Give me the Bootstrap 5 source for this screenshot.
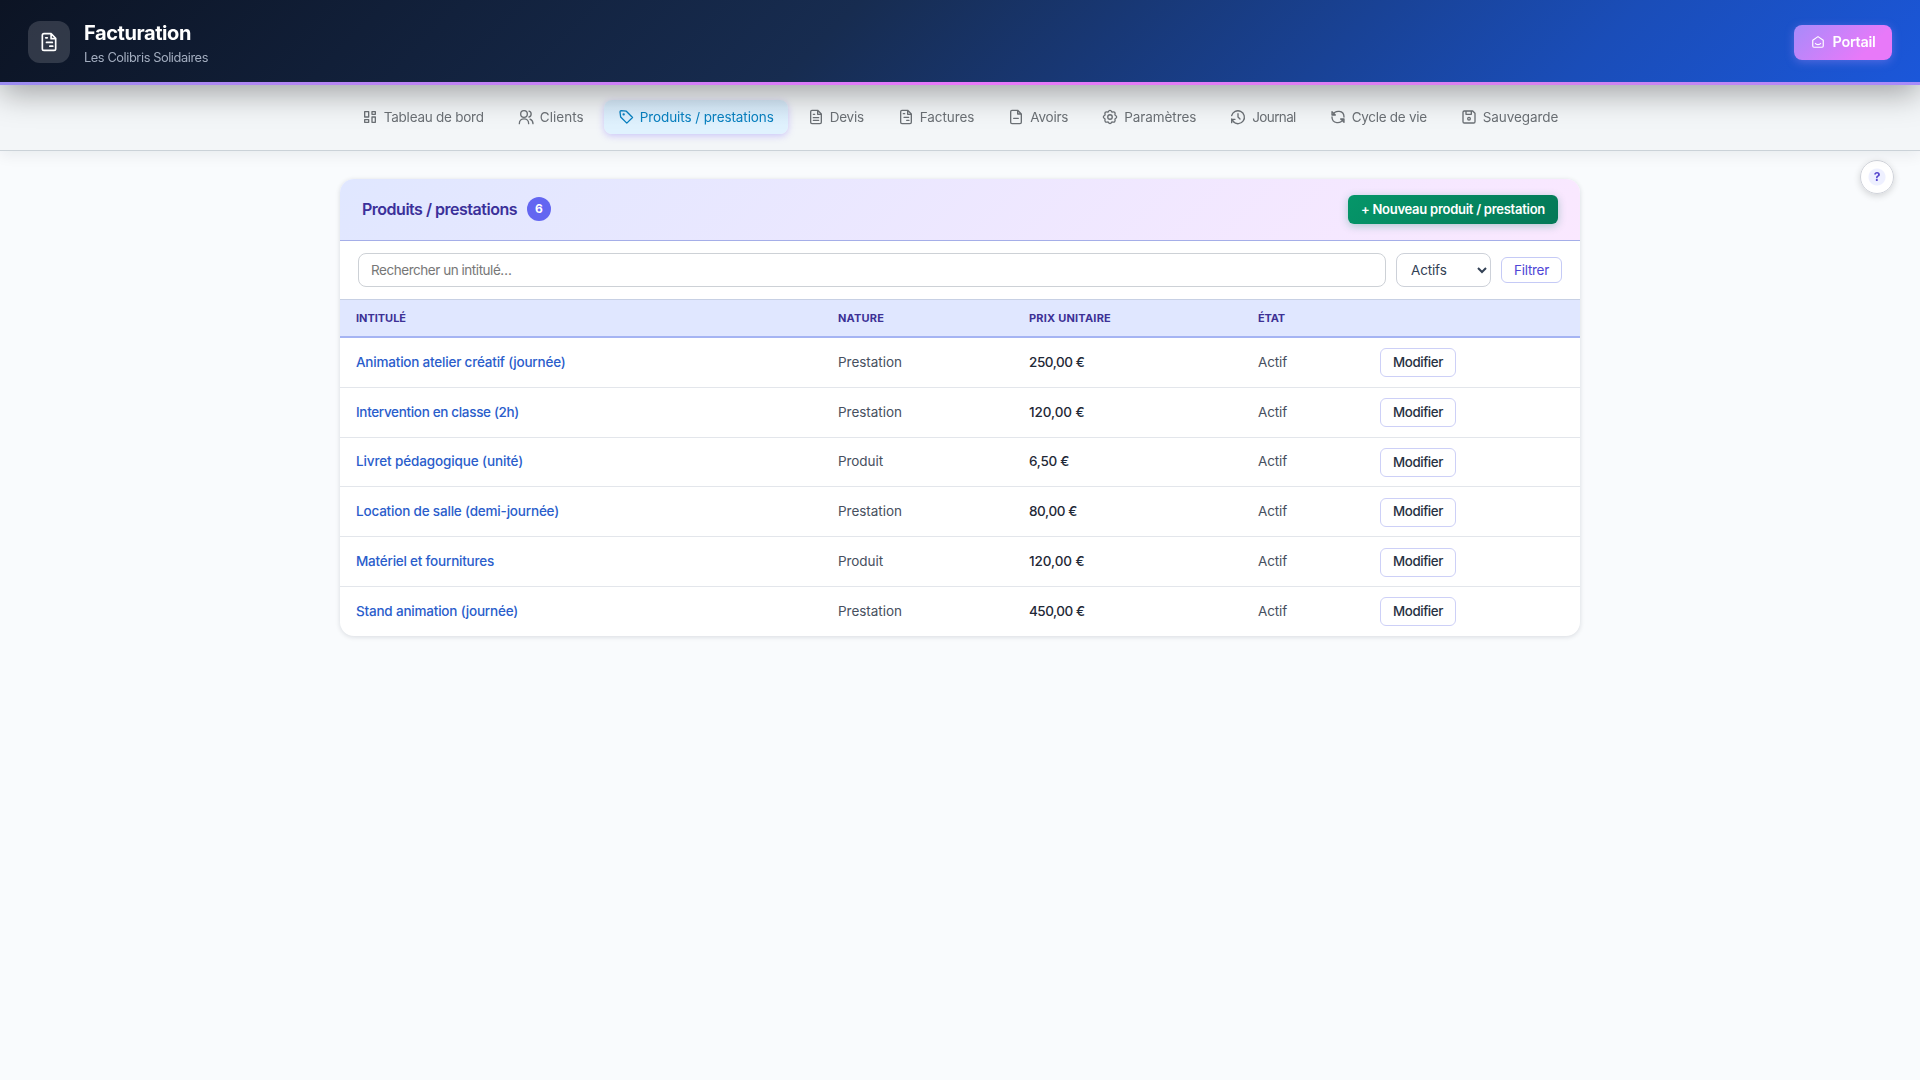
<!DOCTYPE html>
<html lang="fr">
<head>
<meta charset="utf-8">
<meta name="viewport" content="width=device-width, initial-scale=1">
<title>Facturation</title>
<link href="https://cdn.jsdelivr.net/npm/bootstrap@5.3.0/dist/css/bootstrap.min.css" rel="stylesheet">
<style>
body{font-family:Inter,"Noto Sans",sans-serif;background:#f9fbfd;color:#334155;font-size:13.5px;min-height:100vh}
.ico{color:inherit;flex:none}
symbol path,symbol circle,symbol rect{fill:none;stroke:currentColor;stroke-width:2;stroke-linejoin:round;stroke-linecap:round}
.topbar{height:85px;padding:0 28px 1px;background:linear-gradient(135deg,#0c1424 0%,#172c50 43%,#1a4db8 82%,#1b57da 100%);position:relative;z-index:2;box-shadow:0 8px 32px rgba(0,0,0,.35)}
.topbar::after{content:"";position:absolute;left:0;right:0;bottom:0;height:3px;background:linear-gradient(90deg,#9b8cf0,#e879f9 50%,#d882ee 80%,#a78bfa)}
.logo-box{width:42px;height:42px;border-radius:12px;background:rgba(255,255,255,.15);color:#fff}
.brand-copy{margin-left:14px;padding-top:3px}
.app-title{font-size:20px;line-height:25px;font-weight:700;color:#fff}
.app-sub{font-size:12.8px;line-height:19px;color:#a3adbf;margin-top:2px}
.portal{width:98px;height:35px;border-radius:8px;background:linear-gradient(135deg,#a78bfa,#e879f9 75%);color:#fff;font-weight:600;font-size:14.4px;box-shadow:0 2px 10px rgba(167,139,250,.4)}
.subnav{height:66px;border-bottom:1px solid #cbd2d8;background:#f3f6f8;box-shadow:0 4px 14px rgba(15,23,42,.07);position:relative;z-index:1}
.tabs-row{gap:6px;padding-top:15px}
.tab-item{height:34px;padding:0 14px;gap:6px;border-radius:8px;color:#6b7075;font-size:13.5px;white-space:nowrap;text-decoration:none}
.tab-item.active{color:#0880c0;background:linear-gradient(#d6eafa,#e0f2fe 75%);box-shadow:0 2px 7px rgba(139,120,250,.38)}
.panel{width:1240px;margin:28px auto 0;border-radius:14px;background:#fff;box-shadow:0 1px 5px rgba(15,23,42,.14);overflow:hidden}
.panel-head{height:62px;padding:0 22px;background:linear-gradient(135deg,#e0e7ff,#fae8ff);border-bottom:1px solid #a5aee8}
.panel-title{font-size:16px;font-weight:600;color:#3b309a;line-height:1}
.count-dot{width:24px;height:24px;border-radius:50%;background:#6366f1;color:#fff;font-size:12px;font-weight:700;margin-left:10px}
.title-group{padding-bottom:2px}
.add-btn{width:210px;height:29px;border-radius:6px;background:linear-gradient(135deg,#059669,#047857);color:#fff;font-size:13px;font-weight:600;box-shadow:0 2px 8px rgba(5,120,90,.3);white-space:nowrap}
.filters{height:59px;padding:0 18px;gap:10px;border-bottom:1px solid #c7d0e4}
.search-in{height:34px;border:1px solid #cdd1d6;border-radius:8px;padding:0 12px;font-size:13.5px;flex:1;outline:0}
.search-in::placeholder{color:#777;opacity:1;letter-spacing:-.46px}
.state-sel{width:95px;height:34px;border:1px solid #cdd1d9;border-radius:8px;font-size:13.5px;color:#334155;padding:0 4px 0 10px;background:#fff;letter-spacing:-.15px}
.filter-btn{width:61px;height:26px;border:1px solid #c5caf6;border-radius:6px;color:#5046d6;font-size:13.5px}
.data-tbl{table-layout:fixed;width:100%;border-collapse:separate;border-spacing:0}
.data-tbl th{height:38px;background:#e0e7ff;border-bottom:2px solid #a5b4f3;color:#3d3196;font-size:11px;font-weight:700;letter-spacing:.45px;padding:0 16px;vertical-align:middle}
.data-tbl td{height:49.8px;padding:0 16px 1px;border-bottom:1px solid #e3e6eb;vertical-align:middle;font-size:13.5px;color:#475060}
.data-tbl td:last-child{padding:1px 16px 0}
.data-tbl tr:last-child td{height:49px;border-bottom:0}
.data-tbl a{color:#2a5dcb;font-weight:500;text-decoration:none}
.data-tbl .price{color:#1f2937;font-weight:500}
.edit-btn{width:76px;height:29px;border:1px solid #cdd0f7;border-radius:6px;color:#273142;font-size:13.3px;font-weight:500;display:block}
.help-btn{position:fixed;left:1860px;top:160px;width:34px;height:34px;border-radius:50%;border:1px solid #d0d3da;background:radial-gradient(circle,#eef0ff 0 8px,#fff 9px);box-shadow:0 2px 7px rgba(0,0,0,.16);color:#5646ce;font-size:12px;font-weight:700}
</style>
</head>
<body>
<svg class="d-none" xmlns="http://www.w3.org/2000/svg">
<symbol id="dash" viewBox="0 0 24 24"><path d="M4 4H10V12H4ZM15 4H20V8H15ZM15 12H20V20H15ZM4 16H10V20H4Z"/></symbol>
<symbol id="group" viewBox="0 0 24 24"><path d="M2 22C2 12.5 16 12.5 16 22M18 15.2C20.6 16.2 22.5 18.8 22.5 22M16.5 3.2C20.8 4.2 20.8 11 16.5 12"/><circle cx="9" cy="7.5" r="5"/></symbol>
<symbol id="tag" viewBox="0 0 24 24"><path d="M3 4.5L4 12L13.2 21.2L21.8 12.8L12.5 3.3L4.5 2.5Q2.9 2.9 3 4.5Z"/><circle cx="8.5" cy="8" r=".8"/></symbol>
<symbol id="filetext" viewBox="0 0 24 24"><path d="M14.5 2H6Q4 2 4 4V20Q4 22 6 22H18Q20 22 20 20V7.5ZM14.5 2V8H20M8 8H10M8 13H16M8 17H16"/></symbol>
<symbol id="bill" viewBox="0 0 24 24"><path d="M14.5 2H6Q4 2 4 4V20Q4 22 6 22H18Q20 22 20 20V7.5ZM14.5 2V8H20M8 7H10M9 12.5H16M13 17H16.5"/></symbol>
<symbol id="fileminus" viewBox="0 0 24 24"><path d="M14.5 2H6Q4 2 4 4V20Q4 22 6 22H18Q20 22 20 20V7.5ZM14.5 2V7.5H20M8.5 14H15.5"/></symbol>
<symbol id="gear" viewBox="0 0 24 24"><path d="M9 4.6Q12 -.6 15 4.6Q20.8 3.2 19.4 9Q24.6 12 19.4 15Q20.8 20.8 15 19.4Q12 24.6 9 19.4Q3.2 20.8 4.6 15Q-.6 12 4.6 9Q3.2 3.2 9 4.6Z"/><circle cx="12" cy="12" r="3.4"/></symbol>
<symbol id="history" viewBox="0 0 24 24"><path d="M2.5 10A9.7 9.7 0 1 1 5 19.2M2.5 15V20.5M2.5 15.5H7.5M3 16L6 19.5M12 7V12L15 15"/></symbol>
<symbol id="cycle" viewBox="0 0 24 24"><path d="M4.5 8.5C7.5 1.5 21 1.5 21 12M19.5 15.5C16.5 22.5 3 22.5 3 12M3 4V9H8ZM21 20V15H16Z"/></symbol>
<symbol id="save" viewBox="0 0 24 24"><path d="M5 3H17.5L21 6.5V19Q21 21 19 21H5Q3 21 3 19V5Q3 3 5 3ZM7.5 3V8H15.5V3"/><circle cx="12" cy="14.5" r="2"/></symbol>
<symbol id="home" viewBox="0 0 24 24"><path d="M3 9L12 2.8L21 9V19Q21 21 19 21H5Q3 21 3 19ZM7.5 14.5C9 17 15 17 16.5 14.5"/></symbol>
</svg>
<header class="topbar d-flex align-items-center justify-content-between">
  <div class="d-flex align-items-center">
    <div class="logo-box d-flex align-items-center justify-content-center"><svg class="ico" width="20" height="20"><use href="#bill"/></svg></div>
    <div class="brand-copy"><div class="app-title"><span data-w="107">Facturation</span></div><div class="app-sub"><span data-w="124">Les Colibris Solidaires</span></div></div>
  </div>
  <a class="portal d-flex align-items-center justify-content-center text-decoration-none" href="#"><svg class="ico me-2" width="14" height="14"><use href="#home"/></svg><span data-w="43">Portail</span></a>
</header>
<nav class="subnav"><div class="tabs-row d-flex justify-content-center">
  <a class="tab-item d-flex align-items-center" href="#"><svg class="ico" width="16" height="16"><use href="#dash"/></svg><span data-w="100">Tableau de bord</span></a>
  <a class="tab-item d-flex align-items-center" href="#"><svg class="ico" width="16" height="16"><use href="#group"/></svg><span data-w="44">Clients</span></a>
  <a class="tab-item active d-flex align-items-center" href="#"><svg class="ico" width="16" height="16"><use href="#tag"/></svg><span data-w="134">Produits / prestations</span></a>
  <a class="tab-item d-flex align-items-center" href="#"><svg class="ico" width="16" height="16"><use href="#filetext"/></svg><span data-w="34">Devis</span></a>
  <a class="tab-item d-flex align-items-center" href="#"><svg class="ico" width="16" height="16"><use href="#bill"/></svg><span data-w="54.5">Factures</span></a>
  <a class="tab-item d-flex align-items-center" href="#"><svg class="ico" width="16" height="16"><use href="#fileminus"/></svg><span data-w="38">Avoirs</span></a>
  <a class="tab-item d-flex align-items-center" href="#"><svg class="ico" width="16" height="16"><use href="#gear"/></svg><span data-w="72">Paramètres</span></a>
  <a class="tab-item d-flex align-items-center" href="#"><svg class="ico" width="16" height="16"><use href="#history"/></svg><span data-w="43.5">Journal</span></a>
  <a class="tab-item d-flex align-items-center" href="#"><svg class="ico" width="16" height="16"><use href="#cycle"/></svg><span data-w="75">Cycle de vie</span></a>
  <a class="tab-item d-flex align-items-center" href="#"><svg class="ico" width="16" height="16"><use href="#save"/></svg><span data-w="75.5">Sauvegarde</span></a>
</div></nav>
<button class="help-btn d-flex align-items-center justify-content-center p-0">?</button>
<main class="panel">
  <div class="panel-head d-flex align-items-center justify-content-between">
    <div class="title-group d-flex align-items-center"><div class="panel-title"><span data-w="155">Produits / prestations</span></div><span class="count-dot d-flex align-items-center justify-content-center">6</span></div>
    <button class="add-btn btn p-0 border-0"><span data-w="184">+ Nouveau produit / prestation</span></button>
  </div>
  <form class="filters d-flex align-items-center">
    <input class="search-in" type="text" placeholder="Rechercher un intitulé…">
    <select class="state-sel"><option>Actifs</option></select>
    <button class="filter-btn btn p-0" type="button"><span data-w="35">Filtrer</span></button>
  </form>
  <table class="data-tbl">
    <colgroup><col style="width:482px"><col style="width:191px"><col style="width:229px"><col style="width:122px"><col></colgroup>
    <thead><tr><th><span data-w="50">INTITULÉ</span></th><th><span data-w="46">NATURE</span></th><th><span data-w="82">PRIX UNITAIRE</span></th><th><span data-w="27">ÉTAT</span></th><th></th></tr></thead>
    <tbody>
    <tr><td><a href="#"><span data-w="209.5">Animation atelier créatif (journée)</span></a></td><td><span data-w="64">Prestation</span></td><td class="price"><span data-w="55.5">250,00 €</span></td><td><span data-w="29">Actif</span></td><td><button class="edit-btn btn p-0"><span data-w="50">Modifier</span></button></td></tr>
    <tr><td><a href="#"><span data-w="163">Intervention en classe (2h)</span></a></td><td><span data-w="64">Prestation</span></td><td class="price"><span data-w="55.5">120,00 €</span></td><td><span data-w="29">Actif</span></td><td><button class="edit-btn btn p-0"><span data-w="50">Modifier</span></button></td></tr>
    <tr><td><a href="#"><span data-w="167">Livret pédagogique (unité)</span></a></td><td><span data-w="45">Produit</span></td><td class="price"><span data-w="40">6,50 €</span></td><td><span data-w="29">Actif</span></td><td><button class="edit-btn btn p-0"><span data-w="50">Modifier</span></button></td></tr>
    <tr><td><a href="#"><span data-w="203">Location de salle (demi-journée)</span></a></td><td><span data-w="64">Prestation</span></td><td class="price"><span data-w="48">80,00 €</span></td><td><span data-w="29">Actif</span></td><td><button class="edit-btn btn p-0"><span data-w="50">Modifier</span></button></td></tr>
    <tr><td><a href="#"><span data-w="138">Matériel et fournitures</span></a></td><td><span data-w="45">Produit</span></td><td class="price"><span data-w="55.5">120,00 €</span></td><td><span data-w="29">Actif</span></td><td><button class="edit-btn btn p-0"><span data-w="50">Modifier</span></button></td></tr>
    <tr><td><a href="#"><span data-w="162">Stand animation (journée)</span></a></td><td><span data-w="64">Prestation</span></td><td class="price"><span data-w="55.5">450,00 €</span></td><td><span data-w="29">Actif</span></td><td><button class="edit-btn btn p-0"><span data-w="50">Modifier</span></button></td></tr>
    </tbody>
  </table>
</main>
<script src="https://cdn.jsdelivr.net/npm/bootstrap@5.3.0/dist/js/bootstrap.bundle.min.js"></script>
<script>
/* Track each label so that it fills its nominal width */
document.querySelectorAll('[data-w]').forEach(function(el){
  var w = el.getBoundingClientRect().width;
  el.style.letterSpacing = (parseFloat(getComputedStyle(el).letterSpacing) || 0) + (el.dataset.w - w) / el.textContent.length + 'px';
});
</script>
</body>
</html>
